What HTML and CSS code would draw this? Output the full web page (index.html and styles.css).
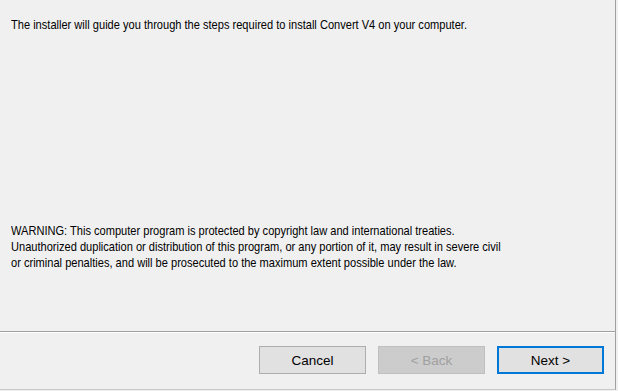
FILE: index.html
```html
<!DOCTYPE html>
<html lang="en">
  <head>
    <meta charset="UTF-8" />
    <title>Convert V4 Setup</title>
    <link rel="stylesheet" href="styles.css">
  </head>
  <body>
    <div class="dialog">
      <div class="content">
        <p class="intro">The installer will guide you through the steps required to install Convert V4 on your computer.</p>
        <p class="warning">WARNING: This computer program is protected by copyright law and international treaties.<br>Unauthorized duplication or distribution of this program, or any portion of it, may result in severe civil<br>or criminal penalties, and will be prosecuted to the maximum extent possible under the law.</p>
      </div>
      <div class="footer">
        <button class="btn">Cancel</button>
        <button class="btn" disabled>&lt; Back</button>
        <button class="btn default">Next &gt;</button>
      </div>
    </div>
  </body>
</html>
```

FILE: styles.css
```css
* {
  margin: 0;
  padding: 0;
  box-sizing: border-box;
}
body {
  width: 618px;
  height: 391px;
  background-color: #f0f0f0;
  font-family: "Liberation Sans", Arial, sans-serif;
  font-size: 13.5px;
  color: #000;
  overflow: hidden;
}
.dialog {
  width: 616px;
  height: 390px;
  border-right: 1px solid #a0a0a0;
  border-bottom: 1px solid #c8c8c8;
}
.content {
  height: 332px;
  padding: 17px 11px 0 11px;
  border-bottom: 1px solid #a0a0a0;
}
.content p {
  line-height: 16px;
  white-space: nowrap;
  transform: scaleX(0.82);
  transform-origin: left top;
}
.warning {
  margin-top: 190px;
}
.footer {
  border-top: 1px solid #fff;
  display: flex;
  justify-content: flex-end;
  gap: 12px;
  padding: 13px 11px 0 0;
}
.btn {
  width: 107px;
  height: 28px;
  font-family: inherit;
  font-size: 13.5px;
  color: #000;
  background-color: #e1e1e1;
  border: 1px solid #adadad;
}
.btn:disabled {
  background-color: #cccccc;
  border-color: #bfbfbf;
  color: #a0a0a0;
}
.btn.default {
  border: 2px solid #0078d7;
}
```
